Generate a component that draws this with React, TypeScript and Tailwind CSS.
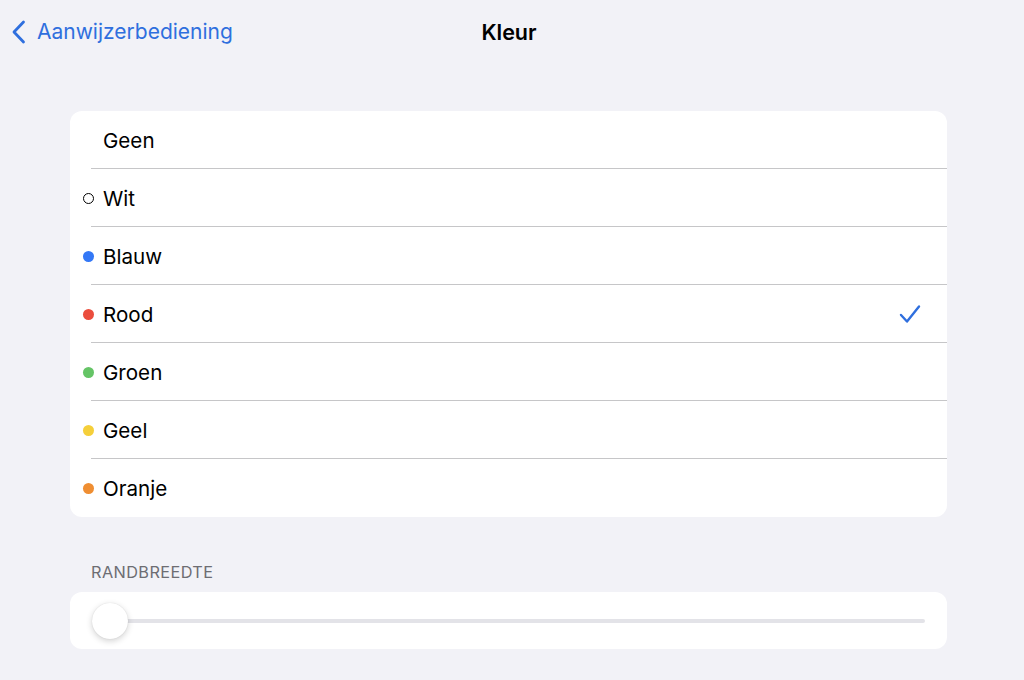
import React from 'react';

const colors = [
  { label: 'Geen', dot: null },
  { label: 'Wit', dot: 'bg-white border-[1.5px] border-black' },
  { label: 'Blauw', dot: 'bg-[#3478f6]' },
  { label: 'Rood', dot: 'bg-[#eb4d3d]' },
  { label: 'Groen', dot: 'bg-[#65c466]' },
  { label: 'Geel', dot: 'bg-[#f5cf3a]' },
  { label: 'Oranje', dot: 'bg-[#ef8e32]' },
];

const selected = 'Rood';

export default function App() {
  return (
    <div
      className="w-[1024px] h-[680px] bg-[#f2f2f7] overflow-hidden text-black"
      style={{ fontFamily: 'Inter, "Liberation Sans", sans-serif' }}
    >
      {/* Nav bar */}
      <div className="relative h-[64px] flex items-center">
        <div className="flex items-center pl-[10px] text-[#2f6fde]">
          <svg width="18" height="26" viewBox="0 0 18 26" fill="none">
            <path d="M13.5 3 L4 13 L13.5 23" stroke="currentColor" strokeWidth="2.8" strokeLinecap="round" strokeLinejoin="round" />
          </svg>
          <span className="ml-[9px] text-[21px]">Aanwijzerbediening</span>
        </div>
        <div className="absolute left-0 right-0 top-0 h-[64px] flex items-center justify-center pointer-events-none">
          <span className="text-[21.5px] font-semibold ml-[-6px]">Kleur</span>
        </div>
      </div>

      {/* Colour list */}
      <div className="mt-[47px] mx-[70px] w-[877px] bg-white rounded-[12px] overflow-hidden">
        {colors.map((c, i) => (
          <div key={c.label} className="relative h-[58px] flex items-center pt-[2px]">
            {c.dot && (
              <span className={`absolute left-[13px] top-[24px] w-[11px] h-[11px] rounded-full ${c.dot}`} />
            )}
            <span className="ml-[33px] text-[20.6px]">{c.label}</span>
            {c.label === selected && (
              <svg className="absolute right-[26px] top-[19px]" width="22" height="20" viewBox="0 0 22 20" fill="none">
                <path d="M2 11 L8 17.5 L20 2.5" stroke="#2f6fde" strokeWidth="2.4" strokeLinecap="round" strokeLinejoin="round" />
              </svg>
            )}
            {i < colors.length - 1 && (
              <div className="absolute left-[21px] right-0 bottom-0 h-px bg-[#c6c6c8]" />
            )}
          </div>
        ))}
      </div>

      {/* Border width */}
      <div className="mt-[43px] ml-[91px] text-[16.3px] tracking-[0.4px] text-[#6d6d72] uppercase">Randbreedte</div>
      <div className="mt-[8px] mx-[70px] w-[877px] h-[57px] bg-white rounded-[12px] flex items-center px-[22px]">
        <div className="relative flex-1 h-[4px] rounded-full bg-[#e3e3e8] ml-[18px]">
          <div className="absolute left-[-18px] top-[-16px] w-[36px] h-[36px] rounded-full bg-white shadow-[0_2px_6px_rgba(0,0,0,0.18),0_0_1px_rgba(0,0,0,0.15)]" />
        </div>
      </div>
    </div>
  );
}
